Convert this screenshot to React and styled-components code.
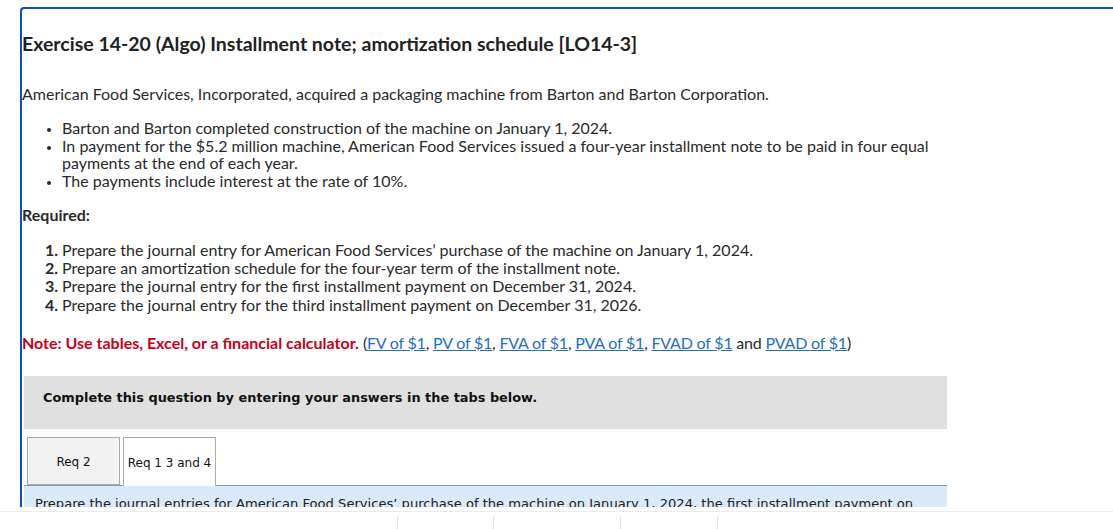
import React from "react";
import styled, { createGlobalStyle } from "styled-components";

const Global = createGlobalStyle`
  html, body { margin: 0; padding: 0; background: #fff; }
  body { overflow: hidden; width: 1113px; height: 529px; }
`;

const Page = styled.div`
  width: 1113px;
  height: 529px;
  overflow: hidden;
  padding: 7px 0 0 20px;
  box-sizing: border-box;
`;

const Card = styled.div`
  width: 1140px;
  height: 500px;
  box-sizing: border-box;
  border-top: 2px solid #0b4fcf;
  border-left: 2px solid #0b4fcf;
  border-top-left-radius: 4px;
  overflow: hidden;
  font-family: Lato, "Open Sans", sans-serif;
  color: #2a2a2a;
`;

const Title = styled.h1`
  margin: 23px 0 0;
  font-size: 19.5px;
  line-height: 24px;
  font-weight: 700;
  color: #222;
`;

const Para = styled.p`
  margin: 29px 0 0;
  font-size: 16px;
  line-height: 18px;
`;

const Bullets = styled.ul`
  margin: 16px 0 0;
  padding-left: 40px;
  width: 910px;
  font-size: 16px;
  line-height: 17.7px;
  li::marker { font-size: 12px; }
`;

const Required = styled.div`
  margin-top: 16px;
  font-size: 16px;
  line-height: 18px;
  font-weight: 700;
`;

const Steps = styled.ol`
  margin: 17px 0 0;
  padding-left: 40px;
  font-size: 16px;
  line-height: 18.3px;
  li::marker { font-weight: 700; }
`;

const Note = styled.p`
  margin: 20px 0 0;
  font-size: 16px;
  line-height: 18px;
`;

const Red = styled.strong`
  color: #c8001a;
  font-weight: 700;
`;

const Links = styled.span`
  letter-spacing: -0.2px;
`;

const Link = styled.a`
  color: #1f6fc6;
  text-decoration: underline;
`;

const Instruction = styled.div`
  margin: 24px 0 0 2px;
  width: 923px;
  height: 53px;
  box-sizing: border-box;
  padding: 14px 0 0 19px;
  background: #e0e0e0;
  font-family: "DejaVu Sans", Verdana, sans-serif;
  font-weight: 700;
  font-size: 12.9px;
  line-height: 16px;
  color: #111;
`;

const TabStrip = styled.div`
  margin: 8px 0 0 2px;
  width: 923px;
  display: flex;
  align-items: flex-end;
  gap: 3px;
  padding-left: 3px;
  box-sizing: border-box;
  border-bottom: 1px solid #999;
  height: 49px;
`;

const Tab = styled.div`
  width: 93px;
  box-sizing: border-box;
  border: 1px solid #aaa;
  border-bottom: ${(p) => (p.$active ? "none" : "1px solid #aaa")};
  background: ${(p) => (p.$active ? "#fff" : "#f2f2f2")};
  margin-bottom: ${(p) => (p.$active ? "-1px" : "0")};
  height: ${(p) => (p.$active ? "49px" : "48px")};
  padding-top: 2px;
  display: flex;
  align-items: center;
  justify-content: center;
  font-family: "DejaVu Sans", Verdana, sans-serif;
  font-size: 12px;
  color: #111;
  white-space: nowrap;
`;

const Panel = styled.div`
  margin-left: 2px;
  width: 923px;
  height: 60px;
  box-sizing: border-box;
  background: #d9ebf9;
  padding: 9px 0 0 11px;
  font-family: "DejaVu Sans", Verdana, sans-serif;
  font-size: 13.1px;
  line-height: 18px;
  color: #222;
`;

const Footer = styled.div`
  margin: 4px 0 0 -20px;
  border-top: 1px solid #ececec;
  display: flex;
  height: 20px;
  padding-top: 4px;
`;

const Cell = styled.div`
  width: ${(p) => p.$w}px;
  border-left: ${(p) => (p.$line ? "1px solid #e6e6e6" : "none")};
  box-sizing: border-box;
`;

export default function App() {
  return (
    <>
      <Global />
      <Page>
        <Card>
          <Title>Exercise 14-20 (Algo) Installment note; amortization schedule [LO14-3]</Title>
          <Para>
            American Food Services, Incorporated, acquired a packaging machine from Barton and Barton
            Corporation.
          </Para>
          <Bullets>
            <li>Barton and Barton completed construction of the machine on January 1, 2024.</li>
            <li>
              In payment for the $5.2 million machine, American Food Services issued a four-year
              installment note to be paid in four equal payments at the end of each year.
            </li>
            <li>The payments include interest at the rate of 10%.</li>
          </Bullets>
          <Required>Required:</Required>
          <Steps>
            <li>Prepare the journal entry for American Food Services’ purchase of the machine on January 1, 2024.</li>
            <li>Prepare an amortization schedule for the four-year term of the installment note.</li>
            <li>Prepare the journal entry for the first installment payment on December 31, 2024.</li>
            <li>Prepare the journal entry for the third installment payment on December 31, 2026.</li>
          </Steps>
          <Note>
            <Red>Note: Use tables, Excel, or a financial calculator.</Red>{" "}
            <Links>
              (<Link>FV of $1</Link>, <Link>PV of $1</Link>, <Link>FVA of $1</Link>,{" "}
              <Link>PVA of $1</Link>, <Link>FVAD of $1</Link> and <Link>PVAD of $1</Link>)
            </Links>
          </Note>
          <Instruction>Complete this question by entering your answers in the tabs below.</Instruction>
          <TabStrip>
            <Tab>Req 2</Tab>
            <Tab $active>Req 1 3 and 4</Tab>
          </TabStrip>
          <Panel>
            Prepare the journal entries for American Food Services’ purchase of the machine on January 1,
            2024, the first installment payment on December 31, 2024, and the third installment payment.
          </Panel>
        </Card>
        <Footer>
          <Cell $w={397} />
          <Cell $w={96} $line />
          <Cell $w={127} $line />
          <Cell $w={97} $line />
          <Cell $w={100} $line />
        </Footer>
      </Page>
    </>
  );
}
